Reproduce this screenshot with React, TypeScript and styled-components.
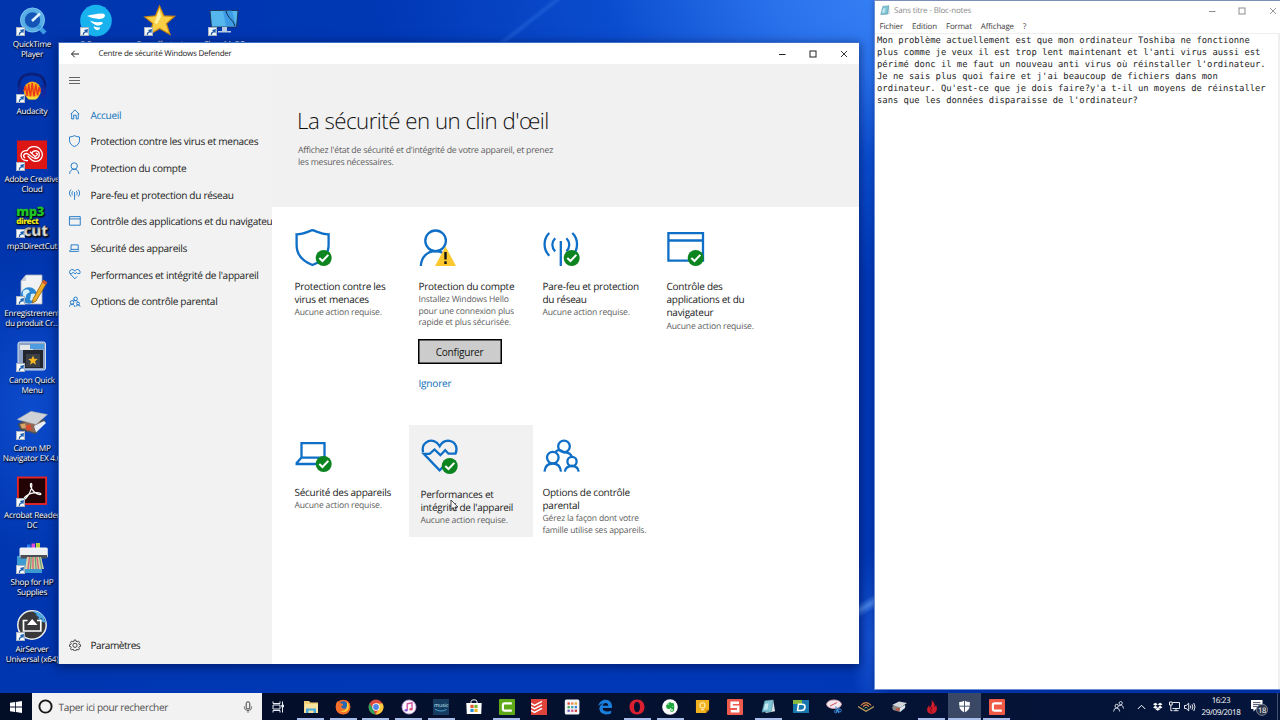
import React from 'react';
import styled, { createGlobalStyle, css } from 'styled-components';
import { FaDropbox, FaEvernote } from 'react-icons/fa';

const GlobalStyle = createGlobalStyle`
  * { box-sizing: border-box; }
  html, body { margin: 0; padding: 0; overflow: hidden; }
  body { font-family: 'Open Sans', 'Noto Sans', sans-serif; text-rendering: geometricPrecision; }
  svg { display: block; flex: none; }
  button { font: inherit; letter-spacing: inherit; }
`;

const Desktop = styled.div`
  position: relative;
  width: 1280px;
  height: 720px;
  overflow: hidden;
  display: flex;
  flex-direction: column;
  background:
    linear-gradient(142deg, transparent 46%, rgba(90, 160, 255, 0.2) 50%, transparent 54%) 480px 0 / 100px 42px no-repeat,
    linear-gradient(150deg, transparent 34%, rgba(110, 170, 255, 0.6) 52%, transparent 70%) 859px 588px / 16px 34px no-repeat,
    radial-gradient(ellipse 22px 90px at 872px 640px, rgba(50, 115, 240, 0.45), transparent),
    radial-gradient(ellipse 560px 290px at 930px -10px, #3b86f8 0%, #2a72ec 28%, rgba(14, 83, 214, 0.75) 58%, rgba(0, 55, 181, 0) 100%),
    radial-gradient(ellipse 90px 150px at 30px 410px, rgba(20, 90, 225, 0.6), transparent),
    linear-gradient(100deg, #0035ad 0%, #0038b7 45%, #0036b3 100%);
`;

const DesktopArea = styled.div`
  flex: 1;
  min-height: 0;
`;

const IconGrid = styled.div`
  display: grid;
  grid-template-rows: repeat(10, 67.25px);
  grid-auto-flow: column;
  grid-auto-columns: 64px;
  width: 256px;
`;

const ShortcutBox = styled.div<{ $col: number; $row: number }>`
  grid-column: ${(p) => p.$col};
  grid-row: ${(p) => p.$row};
  display: flex;
  flex-direction: column;
  align-items: center;
  padding-top: 5px;
  color: #fff;
  font-size: 8.2px;
  line-height: 10px;
  text-align: center;
  white-space: pre;
  letter-spacing: -0.24px;
  text-shadow: 0 1px 2px #000, 1px 1px 1px rgba(0, 0, 0, 0.8);
`;

const ShortcutArt = styled.div`
  position: relative;
  width: 32px;
  height: 32px;
  margin-bottom: 3px;
`;

const ArrowBadge = styled.span`
  position: absolute;
  left: 0;
  bottom: 1px;
  width: 9px;
  height: 9px;
  background: #f4f7fb;
  border: 0.5px solid #a9b4c4;
`;

const Window = styled.section<{ $kind: 'defender' | 'notepad' }>`
  position: absolute;
  display: flex;
  flex-direction: column;
  background: #fff;
  ${(p) =>
    p.$kind === 'defender'
      ? css`
          left: 58px;
          top: 42px;
          width: 801px;
          height: 622px;
          border: 1px solid #3d6fc6;
          border-bottom: 0;
          border-right: 0;
          box-shadow: 0 2px 9px 1px rgba(0, 8, 50, 0.5);
        `
      : css`
          left: 874px;
          top: 0;
          width: 406px;
          height: 690px;
          border: 1px solid #6b8fd2;
          border-top: 1px solid #7c8fb8;
          border-right: 0;
          box-shadow: 0 0 5px rgba(0, 8, 50, 0.35);
        `}
`;

const TitleBar = styled.header`
  display: flex;
  align-items: center;
  height: 21px;
  flex: none;
  padding-left: 11px;
`;

const WindowTitle = styled.h1`
  margin: 0 auto 0 18.5px;
  font-size: 8px;
  font-weight: 400;
  letter-spacing: -0.24px;
  color: #1b1b1b;
  line-height: 12px;
`;

const Controls = styled.div<{ $gap: number; $end: number }>`
  display: flex;
  gap: ${(p) => p.$gap}px;
  padding-right: ${(p) => p.$end}px;
`;

const DefenderBody = styled.div`
  display: flex;
  flex: 1;
  min-height: 0;
`;

const Sidebar = styled.nav`
  width: 213px;
  flex: none;
  overflow: hidden;
  background: #f2f2f2;
  display: flex;
  flex-direction: column;
`;

const MenuButton = styled.div`
  padding: 12px 0 0 10px;
  height: 37.4px;
`;

const NavItem = styled.div<{ $active?: boolean; $bottom?: boolean }>`
  display: flex;
  align-items: center;
  flex: none;
  height: 26.67px;
  padding-left: ${(p) => (p.$bottom ? 10 : 9.5)}px;
  gap: 9.5px;
  font-size: 10.1px;
  letter-spacing: ${(p) => (p.$bottom ? '-0.5px' : '-0.31px')};
  white-space: nowrap;
  color: ${(p) => (p.$active ? '#1173be' : '#1c1c1c')};
  ${(p) => p.$bottom && 'margin: auto 0 5.6px;'}
`;

const Main = styled.main`
  flex: 1;
  min-width: 0;
  background: #fff;
`;

const Hero = styled.div`
  height: 143px;
  padding: 42px 0 0 25px;
  background: #f1f1f1;
`;

const HeroTitle = styled.h2`
  margin: 0;
  font-size: 22.3px;
  line-height: 30px;
  font-weight: 300;
  letter-spacing: -0.53px;
  color: #111;
`;

const HeroText = styled.p`
  margin: 8px 0 0 1px;
  width: 290px;
  font-size: 8.75px;
  line-height: 12px;
  letter-spacing: -0.22px;
  color: #5e5e5e;
  white-space: pre-line;
`;

const TileGrid = styled.div`
  display: grid;
  grid-template-columns: repeat(4, 124px);
  grid-template-rows: 206px 130px;
  padding-left: 13px;
`;

const Tile = styled.article<{ $hover?: boolean }>`
  padding: ${(p) => (p.$hover ? '11px 0 0 11.5px' : '21px 0 0 9.5px')};
  ${(p) =>
    p.$hover &&
    css`
      margin-top: 12px;
      height: 112px;
      background: #f1f1f1;
    `}
`;

const TileTitle = styled.h3`
  margin: 11.6px 0 0;
  font-size: 10px;
  line-height: 13.4px;
  font-weight: 400;
  letter-spacing: -0.27px;
  color: #1a1a1a;
  white-space: pre;
`;

const TileText = styled.p`
  margin: 0.8px 0 0;
  font-size: 8.6px;
  line-height: 11.8px;
  letter-spacing: -0.19px;
  color: #5e5e5e;
  white-space: pre;
`;

const ConfigureButton = styled.button`
  display: block;
  width: 84px;
  height: 25px;
  margin: 10px 0 0 -1px;
  padding: 0;
  border: 0;
  box-shadow: inset 0 0 0 1.5px #000;
  background: #ccc;
  color: #151515;
  font-size: 10.1px;
  letter-spacing: -0.25px;
`;

const LinkText = styled.a`
  display: block;
  margin-top: 11.6px;
  font-size: 10.1px;
  letter-spacing: -0.22px;
  line-height: 14px;
  color: #0a6cb5;
`;

const NoteTitleBar = styled.header`
  display: flex;
  align-items: center;
  height: 19px;
  flex: none;
  padding: 0 0 0 5px;
`;

const NoteTitle = styled.h1`
  margin: 0 auto 0 3px;
  font-size: 8px;
  line-height: 12px;
  font-weight: 400;
  letter-spacing: -0.17px;
  color: #8b8b8b;
`;

const MenuBar = styled.div`
  display: flex;
  flex: none;
  gap: 9px;
  height: 14px;
  padding-left: 4.5px;
  font-size: 7.95px;
  letter-spacing: -0.13px;
  line-height: 15px;
  color: #3e3e3e;
  border-bottom: 1px solid #ededed;
`;

const NoteBody = styled.div`
  flex: 1;
  padding: 0.8px 0 0 2px;
  border-right: 2px solid #efefef;
  font-family: 'DejaVu Sans Mono', monospace;
  font-size: 8.86px;
  line-height: 12px;
  color: #1e1e1e;
  white-space: pre;
`;

const Cursor = styled.div`
  position: absolute;
  left: 450px;
  top: 499px;
`;

const Taskbar = styled.footer`
  position: relative;
  display: flex;
  height: 27px;
  flex: none;
  background: linear-gradient(90deg, #020d26, #04112f 50%, #04153c);
`;

const StartButton = styled.div`
  width: 32px;
  display: grid;
  place-items: center;
`;

const SearchBox = styled.div`
  display: flex;
  align-items: center;
  width: 229.5px;
  flex: none;
  padding: 0 9px 0 6px;
  background: #f2f2f2;
  color: #505050;
  font-size: 10.1px;
  letter-spacing: -0.38px;
`;

const SearchText = styled.span`
  margin: 0 auto 0 5.5px;
`;

const TaskItem = styled.div<{ $open?: boolean; $focus?: boolean }>`
  display: flex;
  justify-content: center;
  align-items: center;
  width: 32.7px;
  flex: none;
  background: ${(p) => (p.$focus ? '#3b4865' : 'transparent')};
  ${(p) =>
    p.$open &&
    css`
      background-image: linear-gradient(#a9bdea, #a9bdea);
      background-size: ${p.$focus ? '33px' : '27px'} 2px;
      background-position: center bottom;
      background-repeat: no-repeat;
    `}
`;

const Tray = styled.div`
  display: flex;
  align-items: center;
  margin-left: auto;
  padding-right: 3px;
  border-right: 1px solid #44506c;
  margin-right: 2px;
  color: #fff;
`;

const TraySlot = styled.div<{ $w: number }>`
  width: ${(p) => p.$w}px;
  display: flex;
  justify-content: center;
`;

const Clock = styled.div`
  width: 46px;
  font-size: 8px;
  line-height: 12px;
  letter-spacing: -0.34px;
  text-align: center;
`;

/* ---------- Defender glyphs ---------- */

type GlyphName = 'home' | 'shield' | 'person' | 'radio' | 'window' | 'laptop' | 'heart' | 'family';

const glyphs: Record<GlyphName, React.ReactNode> = {
  home: <path d="M5 20 L19 6 L33 20 M8.5 17 V35 H15 V23 H23 V35 H29.5 V17" />,
  shield: <path d="M1.6 6.3 C8 6.5 12 4 17.5 2.2 C23 4 27 6.5 33.6 6.3 V17 C33.6 27 26.5 33.5 17.5 37 C8.5 33.5 1.6 27 1.6 17 Z" />,
  person: (
    <>
      <circle cx="16.6" cy="12.8" r="10.3" />
      <path d="M1.8 38 C2.3 28.5 8.5 23.3 16.6 23.2 C24.5 23.3 30.8 28.5 31.4 38" />
    </>
  ),
  radio: (
    <path d="M17.8 13 V38 M6.3 5 C0 11 0 21.5 6.3 27.7 M12.2 10.2 C8.4 14 8.4 19.6 12.2 23.4 M29.3 5 C35.6 11 35.6 21.5 29.3 27.7 M23.4 10.2 C27.2 14 27.2 19.6 23.4 23.4" />
  ),
  window: <path d="M1.4 5.2 H36 V32.6 H1.4 Z M1.4 12.5 H36" />,
  laptop: <path d="M6.5 9.2 H29.5 V23.6 H6.5 Z M6.5 23.6 L1.7 29 V30 H31 M29.5 23.6 L33 27" />,
  heart: (
    <path d="M2 16.2 C0 7 8 3.4 13 5.2 C16 6.2 17.5 8.3 18.7 10.2 C21 6 24.5 4.2 28.5 4.9 C34.5 6 37.2 12 34.5 17.7 H27.5 L24.2 14.2 L19.4 19.2 L13.5 13.5 L8.6 17.8 H2.8 L18.6 34.4 L26 27" />
  ),
  family: (
    <>
      <circle cx="21" cy="12.4" r="5.8" />
      <circle cx="9.8" cy="23.6" r="5.8" />
      <circle cx="29" cy="27.4" r="4.6" />
      <path d="M1.5 37.6 C2 32.5 5 29.5 9.8 29.5 C14.5 29.5 17.4 32.5 18 37.6 M21.8 37.6 C22.3 34.2 25 32 29 32 C33 32 35.2 34.2 35.7 37.6 M12.5 18 C14.5 15.5 18 15.4 21 18.3 C25 18.3 28 20 29 23" />
    </>
  ),
};

/* The account outline leaves its right shoulder open where the warning sign sits. */
const openPerson = (
  <>
    <circle cx="16.6" cy="12.8" r="10.3" />
    <path d="M1.8 38 C2.3 28.5 8.5 23.3 16.6 23.2 C19 23.3 21.5 23.8 23.6 24.8" />
  </>
);

type Status = 'ok' | 'warn' | 'none';

const Glyph = ({ name, size, status = 'none', sw = 2.3 }: { name: GlyphName; size: number; status?: Status; sw?: number }) => (
  <svg width={size} height={size} viewBox="0 0 40 40" overflow="visible">
    <g fill="none" stroke="#0f6fc6" strokeWidth={sw}>
      {status === 'warn' ? openPerson : glyphs[name]}
    </g>
    {status === 'ok' && (
      <>
        <circle cx="28.7" cy="30" r="8" fill="#0c8420" />
        <path d="M24.3 30 L27.5 33 L33.3 26.9" fill="none" stroke="#fff" strokeWidth="2.1" />
      </>
    )}
    {status === 'warn' && (
      <>
        <path d="M26.5 18.5 L37 38 H16 Z" fill="#fbc92f" />
        <path d="M26.5 24 V31.4 M26.5 33.3 V36" stroke="#151515" strokeWidth="2.4" />
      </>
    )}
  </svg>
);

const Gear = () => (
  <svg width="12" height="12" viewBox="0 0 24 24" fill="none" stroke="#333" strokeWidth="1.8">
    <path d="M10.3 2 h3.4 l.6 2.7 2 .9 2.4-1.5 2.3 2.4-1.4 2.4 .8 2 2.6 .6 v3.2 l-2.6 .6-.8 2 1.4 2.4-2.3 2.4-2.4-1.5-2 .9-.6 2.5 h-3.4 l-.6-2.5-2-.9-2.4 1.5-2.3-2.4 1.4-2.4-.8-2-2.6-.6 v-3.2 l2.6-.6 .8-2-1.4-2.4 2.3-2.4 2.4 1.5 2-.9 z" />
    <circle cx="12" cy="12.6" r="4.2" />
  </svg>
);

const CaptionButtons = ({ color }: { color: string }) => (
  <>
    <svg width="8" height="8" viewBox="0 0 8 8"><path d="M1 4.5 H7.5" stroke={color} /></svg>
    <svg width="8" height="8" viewBox="0 0 8 8"><rect x="1" y="1" width="6" height="6" fill="none" stroke={color} /></svg>
    <svg width="8" height="8" viewBox="0 0 8 8"><path d="M1 1 L7 7 M7 1 L1 7" stroke={color} strokeWidth="0.9" /></svg>
  </>
);

/* ---------- Desktop shortcut art ---------- */

const art: Record<string, React.ReactNode> = {
  quicktime: (
    <>
      <circle cx="16.5" cy="15" r="10" fill="#1554b7" stroke="#59aee5" strokeWidth="4.6" />
      <path d="M22 21 L29 28" stroke="#3c9be0" strokeWidth="4.5" />
      <path d="M16 16 L24 8.5" stroke="#dff3ff" strokeWidth="2.5" />
      <circle cx="16.5" cy="15" r="12" fill="none" stroke="#8acdf3" strokeWidth="0.7" />
    </>
  ),
  fsecure: (
    <>
      <circle cx="16" cy="15.6" r="15.8" fill="#18b3ef" />
      <path d="M7 11 Q13 9 22 8.5 Q25 8.3 25 11 Q24 14 19 14 Q13 14 7 11Z M10 15.5 Q15 18 20 17 Q23.5 16.5 22.8 18.5 Q20 21.5 15.5 20 Q12 18.6 10 15.5Z M13.5 21.3 Q17 23 20 22.2 Q20.5 24 17.5 25.2 Q14.5 25 13.5 21.3Z" fill="#fff" />
    </>
  ),
  star: (
    <>
      <path d="M15.5 1 L19.8 10.8 L30.5 11.3 L22.4 18.6 L26 29.5 L15.6 23.4 L6 29.3 L8.7 18.4 L0.8 12 L11.5 10.8 Z" fill="#f8cf45" stroke="#c98511" strokeWidth="1.2" />
      <path d="M15.5 4 L17 12 L13 19 L10.5 18 L12.5 12.3 Z" fill="#fff0a8" />
    </>
  ),
  monitor: (
    <>
      <path d="M2 5.5 H30 L28.5 22 H3.5 Z" fill="#56b7ef" stroke="#1d2c43" strokeWidth="0.8" />
      <path d="M15 5.8 H24 L28 21 H18 Z" fill="#3c9be4" />
      <path d="M18 5.8 C20 14 25 14 27 21" fill="none" stroke="#132848" strokeWidth="1" />
      <path d="M14 22 H19 V26 H23 V27.6 H10 V26 H14 Z" fill="#b7cce3" />
    </>
  ),
  audacity: (
    <>
      <path d="M5 23 C-1 6 8 2 16 2 C24 2 33 6 27 23" fill="none" stroke="#0c1e78" strokeWidth="2.6" />
      <path d="M5.5 14 Q2.5 20 6.5 25 M26.5 14 Q30 20 26 25" stroke="#14299b" strokeWidth="4" fill="none" />
      <ellipse cx="16.3" cy="18.5" rx="8.6" ry="9" fill="#f7a81d" />
      <path d="M8 19 L9.5 14 L11 24 L12.7 12 L14.4 25 L16.2 11 L18 25 L19.8 12.5 L21.5 23 L23.2 15 L24.5 20" fill="none" stroke="#e9391a" strokeWidth="1.4" />
      <path d="M10 24.5 H23 L20 27.6 H12.5Z" fill="#fadb3a" />
    </>
  ),
  creative: (
    <>
      <rect x="1" y="0.5" width="30" height="28.5" fill="#dc1515" />
      <g fill="none" stroke="#fff" strokeWidth="1.3">
        <path d="M10.5 20.6 C3 20 3.2 10 11.2 10.6 C13.5 5.6 22 5.2 25 10.6 C28.5 16 24.5 21.6 19 21.3 C15.8 21 13.5 17.5 11.5 15.8" />
        <path d="M12 20.6 H9.8 M9.2 17.9 C6.5 16.8 7.5 12.9 11.2 13.6 C13.8 14.4 16.3 18.6 19.3 18.5 C24 18.3 24.6 12.2 20.7 10.9 C18.3 10.3 16.8 11.6 15.5 13" />
        <path d="M14 11.8 L20 17.4 M19.5 15.6 C22 15.9 22 12.6 19.7 13.4" />
      </g>
    </>
  ),
  mp3: (
    <g fontFamily="'Open Sans', sans-serif" fontWeight="800" letterSpacing="-0.5">
      <text x="0.3" y="9.4" fontSize="13" fill="#1fc528">mp3</text>
      <text x="0.3" y="17.3" fontSize="8.2" fill="#e9e414">direct</text>
      <text x="7.2" y="28.6" fontSize="15.5" fill="#fff" stroke="#222" strokeWidth="0.3">cut</text>
    </g>
  ),
  register: (
    <>
      <path d="M10 1 H26 V30 H5 V7 Z" fill="#f1f2f4" stroke="#a8b0bb" strokeWidth="0.8" />
      <path d="M10 1 V7 H5 Z" fill="#c9ced6" />
      <circle cx="13" cy="21.5" r="8.3" fill="#2a86d2" />
      <path d="M7 17 Q12 13 14 18 Q9 20 10 24 Q6 23 7 17 M15 20 Q20 18 20 23 Q17 28 14 26Z" fill="#d5f0fb" />
      <path d="M27.5 6 L31 8.5 L20 27 L16.5 29 L17 25 Z" fill="#eeae28" stroke="#935f11" strokeWidth="0.8" />
      <path d="M27.5 6 L31 8.5 L29.7 10.8 L26 8.5Z" fill="#d3563b" />
    </>
  ),
  quickmenu: (
    <>
      <rect x="2" y="1" width="27.5" height="28" rx="2" fill="#8ea4c6" stroke="#d4e0f0" />
      <path d="M4 4 H17 V9 H4Z" fill="#e4e6e8" />
      <path d="M14 3 H28 V8 H14Z" fill="#4f9be0" />
      <path d="M7 9 H27 V27 H7Z" fill="#23262c" />
      <rect x="10" y="13" width="14" height="13" fill="#3a3f48" />
      <path d="M17 14.5 L18.3 17.8 L21.8 18 L19.1 20.3 L20 23.8 L17 21.8 L14 23.8 L14.9 20.3 L12.2 18 L15.7 17.8 Z" fill="#f7b71c" />
    </>
  ),
  navigator: (
    <>
      <path d="M2 15 L12 8 L30 11 L20 25 L4 21 Z" fill="#4a4e54" />
      <path d="M4 15 L14 12 L28 13 L18 23.5 L6 19.5Z" fill="#8d6a58" />
      <path d="M9 17 L14 15 L16 20.5 L11 21.5Z" fill="#d94c2f" />
      <path d="M4 15.5 L9 14.5 L10 18.5 L6 19.5Z" fill="#d9a868" />
      <path d="M18 17 L28 12 L30 14 L20 23.5Z" fill="#e7eef5" />
      <path d="M1 10.5 L15 2.3 L31.5 5.5 L20 15.5 Z" fill="#cfd3d8" stroke="#9aa0a8" strokeWidth="0.5" />
    </>
  ),
  acrobat: (
    <>
      <rect x="1.9" y="1.5" width="28.2" height="26.5" fill="#220407" stroke="#e32526" strokeWidth="1.9" />
      <path d="M8 23.3 C11 23.3 16.3 13 15.8 8.4 C15.4 6.4 13.8 7.8 14.6 10.5 C16 14.6 20 18.4 24 18.6 C26.2 18.4 24.2 16.1 19 16.6 C13.7 17 8 20.2 8 23.3Z" fill="none" stroke="#fff" strokeWidth="1.2" />
    </>
  ),
  printer: (
    <>
      <rect x="1" y="13" width="25" height="17" fill="#3d9bd2" />
      <path d="M11 1.5 H14.5 V5 H11Z" fill="#2d7dea" /><path d="M15.5 0.5 H19 V5 H15.5Z" fill="#e14bd4" /><path d="M20 0 H24 V5 H20Z" fill="#b9cf3b" />
      <rect x="3.5" y="4.5" width="28.3" height="10" rx="1.5" fill="#eef0f2" />
      <path d="M4.5 12 H31 V15.5 H4.5Z" fill="#4a4f55" />
      <path d="M11 14 H25 L28 26 H9Z" fill="#d8d2a4" />
      <path d="M13.5 14 L12 26 M17 14 V26 M21 14 L22.5 26" stroke="#d5677a" strokeWidth="1.4" />
      <path d="M15.2 14 L14.4 26 M19.2 14 L20 26 M23.5 14 L25.8 26" stroke="#5d9f76" strokeWidth="1.2" />
    </>
  ),
  airserver: (
    <>
      <circle cx="16" cy="15" r="14.2" fill="#39393b" stroke="#eef0f2" strokeWidth="1.5" />
      <path d="M17 1 L21 6 L24 11 L30 13 C30 7 25 1.5 17 1Z" fill="#4fa7df" />
      <path d="M19 3 L23 8 L29 10" fill="none" stroke="#1d3a55" strokeWidth="1" strokeDasharray="2 2" />
      <path d="M11.5 10.5 H7.5 V21 H24.8 V10.5 H21" fill="none" stroke="#fff" strokeWidth="1.7" />
      <path d="M16.2 9 L21.5 15 H11 Z" fill="#fff" />
    </>
  ),
};

const shortcuts = [
  { art: 'quicktime', label: 'QuickTime\nPlayer', col: 1, row: 1 },
  { art: 'audacity', label: 'Audacity', col: 1, row: 2 },
  { art: 'creative', label: 'Adobe Creative\nCloud', col: 1, row: 3 },
  { art: 'mp3', label: 'mp3DirectCut', col: 1, row: 4 },
  { art: 'register', label: 'Enregistrement\ndu produit Cr...', col: 1, row: 5 },
  { art: 'quickmenu', label: 'Canon Quick\nMenu', col: 1, row: 6 },
  { art: 'navigator', label: 'Canon MP\nNavigator EX 4.0', col: 1, row: 7 },
  { art: 'acrobat', label: 'Acrobat Reader\nDC', col: 1, row: 8 },
  { art: 'printer', label: 'Shop for HP\nSupplies', col: 1, row: 9 },
  { art: 'airserver', label: 'AirServer\nUniversal (x64)', col: 1, row: 10 },
  { art: 'fsecure', label: 'F-Secure', col: 2, row: 1 },
  { art: 'star', label: 'Easyeffortest', col: 3, row: 1 },
  { art: 'monitor', label: 'CleanMyPC', col: 4, row: 1 },
];

const Shortcut = ({ item }: { item: (typeof shortcuts)[number] }) => (
  <ShortcutBox $col={item.col} $row={item.row}>
    <ShortcutArt>
      <svg width="32" height="32" viewBox="0 0 32 32" overflow="visible">{art[item.art]}</svg>
      <ArrowBadge>
        <svg width="8" height="8" viewBox="0 0 8 8"><path d="M1.8 7 C1.8 4.5 2.6 3.6 4.2 3.4 L3 2 L7 1 L6.4 5.2 L5.3 4.2 C3.6 4.6 3 5.4 2.8 7Z" fill="#1d5fb0" /></svg>
      </ArrowBadge>
    </ShortcutArt>
    {item.label}
  </ShortcutBox>
);

/* ---------- Defender content ---------- */

const navItems: { icon: GlyphName; label: string; active?: boolean }[] = [
  { icon: 'home', label: 'Accueil', active: true },
  { icon: 'shield', label: 'Protection contre les virus et menaces' },
  { icon: 'person', label: 'Protection du compte' },
  { icon: 'radio', label: 'Pare-feu et protection du réseau' },
  { icon: 'window', label: 'Contrôle des applications et du navigateur' },
  { icon: 'laptop', label: 'Sécurité des appareils' },
  { icon: 'heart', label: "Performances et intégrité de l'appareil" },
  { icon: 'family', label: 'Options de contrôle parental' },
];

type TileData = { icon: GlyphName; title: string; text: string; status: Status; hover?: boolean; action?: boolean };

const tiles: TileData[] = [
  { icon: 'shield', title: 'Protection contre les\nvirus et menaces', text: 'Aucune action requise.', status: 'ok' },
  { icon: 'person', title: 'Protection du compte', text: 'Installez Windows Hello\npour une connexion plus\nrapide et plus sécurisée.', status: 'warn', action: true },
  { icon: 'radio', title: 'Pare-feu et protection\ndu réseau', text: 'Aucune action requise.', status: 'ok' },
  { icon: 'window', title: 'Contrôle des\napplications et du\nnavigateur', text: 'Aucune action requise.', status: 'ok' },
  { icon: 'laptop', title: 'Sécurité des appareils', text: 'Aucune action requise.', status: 'ok' },
  { icon: 'heart', title: "Performances et\nintégrité de l'appareil", text: 'Aucune action requise.', status: 'ok', hover: true },
  { icon: 'family', title: 'Options de contrôle\nparental', text: 'Gérez la façon dont votre\nfamille utilise ses appareils.', status: 'none' },
];

const DefenderWindow = () => (
  <Window $kind="defender">
    <TitleBar>
      <svg width="10" height="10" viewBox="0 0 10 10"><path d="M9 5 H1.5 M4.8 1.7 L1.5 5 L4.8 8.3" fill="none" stroke="#222" /></svg>
      <WindowTitle>Centre de sécurité Windows Defender</WindowTitle>
      <Controls $gap={22.7} $end={11.4}><CaptionButtons color="#222" /></Controls>
    </TitleBar>
    <DefenderBody>
      <Sidebar>
        <MenuButton>
          <svg width="11" height="8" viewBox="0 0 11 8"><path d="M0 1.5 H11 M0 4.5 H11 M0 7.5 H11" stroke="#555" strokeWidth="0.9" /></svg>
        </MenuButton>
        {navItems.map((n) => (
          <NavItem key={n.label} $active={n.active}>
            <Glyph name={n.icon} size={12.5} sw={2.8} />
            {n.label}
          </NavItem>
        ))}
        <NavItem $bottom>
          <Gear />
          <span>Paramètres</span>
        </NavItem>
      </Sidebar>
      <Main>
        <Hero>
          <HeroTitle>La sécurité en un clin d'œil</HeroTitle>
          <HeroText>{"Affichez l'état de sécurité et d'intégrité de votre appareil, et prenez\nles mesures nécessaires."}</HeroText>
        </Hero>
        <TileGrid>
          {tiles.map((t) => (
            <Tile key={t.title} $hover={t.hover}>
              <Glyph name={t.icon} size={40} status={t.status} />
              <TileTitle>{t.title}</TileTitle>
              <TileText>{t.text}</TileText>
              {t.action && (
                <>
                  <ConfigureButton>Configurer</ConfigureButton>
                  <LinkText>Ignorer</LinkText>
                </>
              )}
            </Tile>
          ))}
        </TileGrid>
      </Main>
    </DefenderBody>
  </Window>
);

const noteText = `Mon problème actuellement est que mon ordinateur Toshiba ne fonctionne
plus comme je veux il est trop lent maintenant et l'anti virus aussi est
périmé donc il me faut un nouveau anti virus où réinstaller l'ordinateur.
Je ne sais plus quoi faire et j'ai beaucoup de fichiers dans mon
ordinateur. Qu'est-ce que je dois faire?y'a t-il un moyens de réinstaller
sans que les données disparaisse de l'ordinateur?`;

const NotepadArt = ({ size }: { size: number }) => (
  <svg width={size} height={size} viewBox="0 0 16 16">
    <path d="M4 2 L13 1 L15 13 L5 15Z" fill="#d9e2e6" />
    <path d="M4 2 L13 1 L11 13 L1 14Z" fill="#7dc4d6" stroke="#4b8797" strokeWidth="0.6" />
    <path d="M4.5 5 L8 4.6 L7 11 L3 11.4Z" fill="#c4e9ef" />
  </svg>
);

const NotepadWindow = () => (
  <Window $kind="notepad">
    <NoteTitleBar>
      <NotepadArt size={11} />
      <NoteTitle>Sans titre - Bloc-notes</NoteTitle>
      <Controls $gap={22.3} $end={3.5}><CaptionButtons color="#8d8d8d" /></Controls>
    </NoteTitleBar>
    <MenuBar>
      <span>Fichier</span><span>Edition</span><span>Format</span><span>Affichage</span><span>?</span>
    </MenuBar>
    <NoteBody>{noteText}</NoteBody>
  </Window>
);

/* ---------- Taskbar ---------- */

const Svg16 = ({ children, size = 16 }: { children: React.ReactNode; size?: number }) => (
  <svg width={size} height={size} viewBox="0 0 16 16">{children}</svg>
);

const CamtasiaC = ({ color }: { color: string }) => (
  <Svg16>
    <rect width="16" height="16" rx="1" fill={color} />
    <path d="M12.8 4.3 H5.6 Q3.9 4.3 3.9 6 V10 Q3.9 11.7 5.6 11.7 H12.8" fill="none" stroke="#fff" strokeWidth="2.2" />
  </Svg16>
);

const dotColors = ['#df4438', '#e9884c', '#e7a72c', '#48a557', '#3fa6a1', '#3c83d6', '#7462c4', '#d75393', '#d04444'];

const tasks: { id: string; open?: boolean; focus?: boolean; node: React.ReactNode }[] = [
  { id: 'taskview', node: (
    <svg width="12" height="12" viewBox="0 0 12 12" fill="none" stroke="#e8ecf5" strokeWidth="1"><path d="M1 .5 V2.5 H8 V.5 M1 11.5 V9.5 H8 V11.5 M1 4 H8 V8 H1Z M10.5 .5 V11.5 M9.8 4 H11.5 V6 H9.8Z" /></svg>
  ) },
  { id: 'explorer', open: true, node: (
    <Svg16><path d="M1 2 H6 L7.5 3.5 H15 V13 H1Z" fill="#f0cf76" /><path d="M2 5 H15 V14 H1Z" fill="#f9e3a0" /><path d="M3 14 V9.5 H13 V14 H10.5 V11.5 H5.5 V14Z" fill="#4ba9dd" /></Svg16>
  ) },
  { id: 'firefox', open: true, node: (
    <Svg16><circle cx="8" cy="8" r="7.3" fill="#f0642a" /><circle cx="8.4" cy="7" r="4.7" fill="#2367b5" /><path d="M1 5 L2.5 2 L5 4.2 Q8 4 8.5 6 L6 7.5 Q7 10.5 11 9.6 Q13.5 8 12.3 4 Q10.6 1.5 9.5 1 Q15.3 2 15.4 8 Q14.8 15.4 8 15.5 Q1 15 .8 8Z" fill="#f4702a" /><path d="M12 3 Q16 7 12 12 Q9 14 5 12 Q13 13 12 3" fill="#fdcf36" /></Svg16>
  ) },
  { id: 'chrome', open: true, node: (
    <Svg16><circle cx="8" cy="8" r="7.4" fill="#dd4b3e" /><path d="M1.6 4.3 L5.1 10 L7.5 15.4 A7.4 7.4 0 0 1 1.6 4.3" fill="#2da35a" /><path d="M8 4.5 H14.6 A7.4 7.4 0 0 1 7.5 15.4 L11 9.8Z" fill="#fbcb3d" /><circle cx="8" cy="8" r="3.7" fill="#fff" /><circle cx="8" cy="8" r="2.9" fill="#4b87e8" /></Svg16>
  ) },
  { id: 'itunes', open: true, node: (
    <Svg16><circle cx="8" cy="8" r="7" fill="#fbf9ff" stroke="#c9a2dd" strokeWidth="0.8" /><path d="M6.2 11 V4.8 L11 3.8 V10" fill="none" stroke="#cf4a9c" strokeWidth="1.3" /><ellipse cx="5.2" cy="11.2" rx="1.6" ry="1.3" fill="#8a5ad8" /><ellipse cx="10" cy="10.2" rx="1.6" ry="1.3" fill="#e0506f" /></Svg16>
  ) },
  { id: 'music', open: true, node: (
    <Svg16><rect width="16" height="16" fill="#163b60" /><text x="1" y="8.3" fontSize="5.3" fontFamily="Open Sans, sans-serif" fill="#c5edf9">music</text><path d="M2 10.3 Q8 13.6 13.5 10.5" fill="none" stroke="#45a3cc" strokeWidth="1" /></Svg16>
  ) },
  { id: 'store', node: (
    <Svg16><path d="M5 4 V2.5 Q5 .8 8 .8 Q11 .8 11 2.5 V4" fill="none" stroke="#fff" /><path d="M.3 4 H15.7 L15.2 15 H.8Z" fill="#fff" /><path d="M4.4 5.8 H7.6 V9 H4.4Z" fill="#e35632" /><path d="M8.4 5.8 H11.6 V9 H8.4Z" fill="#7ab62f" /><path d="M4.4 9.8 H7.6 V13 H4.4Z" fill="#2793dc" /><path d="M8.4 9.8 H11.6 V13 H8.4Z" fill="#f2b321" /></Svg16>
  ) },
  { id: 'camtasia', open: true, node: <CamtasiaC color="#5fa819" /> },
  { id: 'todoist', node: (
    <Svg16><rect width="16" height="16" fill="#e0433a" /><path d="M0 4.5 L3.5 6.3 L11 2.3 M0 8 L3.5 9.8 L11 5.8 M0 11.5 L3.5 13.3 L11 9.3" fill="none" stroke="#fff" strokeWidth="1.5" /></Svg16>
  ) },
  { id: 'apps', node: (
    <Svg16><rect x=".8" y=".5" width="14.6" height="15" rx="1.5" fill="#f4f4f6" />{dotColors.map((c, i) => <rect key={i} x={3.5 + (i % 3) * 3.6} y={3.4 + Math.floor(i / 3) * 3.6} width="2.3" height="2.3" fill={c} />)}</Svg16>
  ) },
  { id: 'edge', node: (
    <Svg16><path d="M1.2 7.3 C2 3 5 .8 8.6 .8 C12.8 .8 15 3.8 15 7.4 V9 H5.6 C5.8 11.6 8 12.5 10 12.5 C11.8 12.5 13.2 12 14.2 11.4 V14.2 C12.8 15 11 15.4 9.2 15.4 C5 15.4 2.4 13 2.4 9.6 C2.4 7.2 3.8 5.4 6 4.4 C3.8 4.6 2.2 5.8 1.2 7.3Z M5.7 6.7 H11.2 C11.2 4.9 10.2 4 8.7 4 C7 4 5.9 5.2 5.7 6.7Z" fillRule="evenodd" fill="#1a7fdc" /></Svg16>
  ) },
  { id: 'opera', open: true, node: (
    <Svg16><path fillRule="evenodd" d="M8 .5 C12.5 .5 15.5 3.6 15.5 8 C15.5 12.4 12.5 15.5 8 15.5 C3.5 15.5 .5 12.4 .5 8 C.5 3.6 3.5 .5 8 .5Z M8 2.8 C6 2.8 5 5 5 8 C5 11 6 13.2 8 13.2 C10 13.2 11 11 11 8 C11 5 10 2.8 8 2.8Z" fill="#da2030" /></Svg16>
  ) },
  { id: 'evernote', open: true, node: (
    <svg width="16" height="16" viewBox="0 0 16 16"><circle cx="8" cy="8" r="7.8" fill="#fff" /><g transform="translate(2.7 2.5)"><FaEvernote size={11} color="#1fa83b" /></g></svg>
  ) },
  { id: 'keep', node: (
    <Svg16 size={15}><path d="M1 1 H15 V11.5 L11.5 15 H1Z" fill="#f2b21f" /><path d="M15 11.5 H11.5 V15Z" fill="#c47e0d" /><circle cx="8" cy="6.8" r="2.7" fill="none" stroke="#fdf0c5" strokeWidth="1.1" /><path d="M6.7 11.3 H9.3" stroke="#fdf0c5" strokeWidth="1.3" /></Svg16>
  ) },
  { id: 'snagit', node: (
    <Svg16><rect width="16" height="16" rx="1" fill="#ec5b4b" /><path d="M12 3.8 H4.6 V7.8 H11.2 V12.3 H3.8" fill="none" stroke="#fff" strokeWidth="2.4" /></Svg16>
  ) },
  { id: 'notepad', open: true, node: <NotepadArt size={15} /> },
  { id: 'ding', node: (
    <Svg16><rect y="1" width="16" height="13" fill="#1878ae" /><path d="M0 1 H9 V5 H0Z" fill="#87bb3e" /><path d="M5.5 5.2 H9 Q12.5 5.4 12 8.3 Q11.5 11.5 8 11.5 H4.6Z" fill="none" stroke="#fff" strokeWidth="1.6" /></Svg16>
  ) },
  { id: 'snip', node: (
    <Svg16><ellipse cx="8" cy="5.2" rx="7.4" ry="4.3" fill="#f3e9ec" stroke="#d7a0ab" strokeWidth="0.8" /><path d="M4 7 L11 3.5" stroke="#d24b5b" strokeWidth="1" /><path d="M9.5 7.5 L13 14 M13.5 8.5 L10 13" stroke="#4b98dc" strokeWidth="1.1" /><circle cx="9.8" cy="12.5" r="1.4" fill="none" stroke="#3684d2" /><circle cx="14" cy="11.5" r="1.4" fill="none" stroke="#3684d2" /></Svg16>
  ) },
  { id: 'audible', node: (
    <Svg16><path d="M0 7.5 L8 12.3 L16 7.5" fill="none" stroke="#bda65d" strokeWidth="1.2" /><path d="M2.8 6.5 Q8 .8 13.2 6.5 M5 7.8 Q8 4 11 7.6" fill="none" stroke="#e08a42" strokeWidth="1.1" /><path d="M6.5 9.3 Q8 7.3 9.5 9.2" fill="none" stroke="#8bb062" /></Svg16>
  ) },
  { id: 'canon', node: (
    <Svg16><path d="M1 8 L6 5 L15 7 L9 13 L2 11Z" fill="#8b8886" /><path d="M5 9.5 L9 9 L7.5 12 L4.5 11Z" fill="#c9503b" /><path d="M9 9 L14 6 L14 9 L9 13Z" fill="#dbe4ec" /><path d="M1 6 L8 2.5 L16 4 L9.5 8.5Z" fill="#d2d5d9" /></Svg16>
  ) },
  { id: 'flame', open: true, node: (
    <Svg16><path d="M7.5 1 Q12 5 10.3 8.3 L12.3 6.2 Q14.6 13.8 8 15 Q2 14.5 3.3 9 L5.3 6 L5.6 9 Q8.8 5.5 7.5 1Z" fill="#cf1c2a" /><path d="M8 8 Q5.7 11 7.3 13.5" fill="none" stroke="#6d0c18" strokeWidth="1" /></Svg16>
  ) },
  { id: 'defender', open: true, focus: true, node: (
    <Svg16 size={13}><path d="M1.5 2.5 Q5 2.5 8 .6 Q11 2.5 14.5 2.5 V7.5 Q14 12.5 8 15.5 Q2 12.5 1.5 7.5Z" fill="#fff" /><path d="M8 0 V16 M1 7.6 H15" stroke="#3b4865" strokeWidth="1.1" /></Svg16>
  ) },
  { id: 'recorder', open: true, node: <CamtasiaC color="#ee5a45" /> },
];

const Bar = () => (
  <Taskbar>
    <StartButton>
      <svg width="12" height="12" viewBox="0 0 12 12"><path d="M0 1.8 L5.2 1 V5.6 H0Z M6 .9 L12 0 V5.6 H6Z M0 6.4 H5.2 V11 L0 10.2Z M6 6.4 H12 V12 L6 11.1Z" fill="#fff" /></svg>
    </StartButton>
    <SearchBox>
      <svg width="15" height="15" viewBox="0 0 15 15"><circle cx="7.5" cy="7.5" r="6.1" fill="none" stroke="#171717" strokeWidth="1.9" /></svg>
      <SearchText>Taper ici pour rechercher</SearchText>
      <svg width="10" height="12" viewBox="0 0 10 12" fill="none" stroke="#3c3c3c"><rect x="3.2" y=".8" width="3.6" height="7.2" rx="1.8" /><path d="M1.4 5.5 V6.5 Q1.5 9.4 5 9.5 Q8.5 9.4 8.6 6.5 V5.5 M5 9.5 V11.8" strokeWidth=".8" /></svg>
    </SearchBox>
    {tasks.map((t) => (
      <TaskItem key={t.id} $open={t.open} $focus={t.focus}>{t.node}</TaskItem>
    ))}
    <Tray>
      <TraySlot $w={28}>
        <svg width="11" height="11" viewBox="0 0 11 11" fill="none" stroke="#e5e9f3" strokeWidth=".9"><circle cx="3.7" cy="5" r="1.7" /><path d="M.6 10.5 Q.8 7 3.7 7 Q6.4 7 6.7 10.5" /><circle cx="7.7" cy="2.2" r="1.6" /><path d="M6 5 Q7 4 8.3 4.2 Q10.2 4.5 10.5 7.5" /></svg>
      </TraySlot>
      <TraySlot $w={18}><svg width="9" height="6" viewBox="0 0 9 6"><path d="M.8 5 L4.5 1.3 L8.2 5" fill="none" stroke="#fff" /></svg></TraySlot>
      <TraySlot $w={16}><FaDropbox size={9.5} color="#fff" /></TraySlot>
      <TraySlot $w={16}><svg width="11" height="11" viewBox="0 0 11 11" fill="none" stroke="#fff" strokeWidth=".9"><path d="M3.5 1.5 H10.5 V7.5 H3.5 M7 7.5 V9.5 M4.5 9.7 H9.5 M.5 1 H3.2 V4 H.5Z M1.8 4 V9.7 H3.5" /></svg></TraySlot>
      <TraySlot $w={16}><svg width="12" height="10" viewBox="0 0 12 10" fill="none" stroke="#fff" strokeWidth=".9"><path d="M.5 3.5 H2.2 L4.7 1.2 V8.8 L2.2 6.5 H.5Z M6.3 3.5 Q7.3 5 6.3 6.5 M8 2.3 Q9.8 5 8 7.7 M9.7 1 Q12.4 5 9.7 9" /></svg></TraySlot>
      <Clock>16:23<br />29/09/2018</Clock>
      <TraySlot $w={30}>
        <svg width="18" height="18" viewBox="0 0 18 18">
          <path d="M1 2 H12.5 V11 H6 L3.5 13.5 V11 H1Z" fill="#fff" />
          <path d="M3 4.6 H10.5 M3 6.6 H10.5 M3 8.6 H8" stroke="#1b2947" strokeWidth=".8" />
          <circle cx="12" cy="11.8" r="5.6" fill="#2b3448" stroke="#9aa2b2" strokeWidth=".7" />
          <text x="12" y="14.6" fontSize="7.6" textAnchor="middle" letterSpacing="-0.3" fontFamily="Open Sans, sans-serif" fill="#fff">18</text>
        </svg>
      </TraySlot>
    </Tray>
  </Taskbar>
);

export default function App() {
  return (
    <>
      <GlobalStyle />
      <Desktop>
        <DesktopArea>
          <IconGrid>
            {shortcuts.map((s) => <Shortcut key={s.label} item={s} />)}
          </IconGrid>
        </DesktopArea>
        <DefenderWindow />
        <NotepadWindow />
        <Cursor>
          <svg width="9" height="13" viewBox="0 0 9 13"><path d="M1 1 V10.5 L3.2 8.5 L4.7 12 L6.2 11.3 L4.8 8 H7.8 Z" fill="#fff" stroke="#222" strokeWidth=".8" /></svg>
        </Cursor>
        <Bar />
      </Desktop>
    </>
  );
}
